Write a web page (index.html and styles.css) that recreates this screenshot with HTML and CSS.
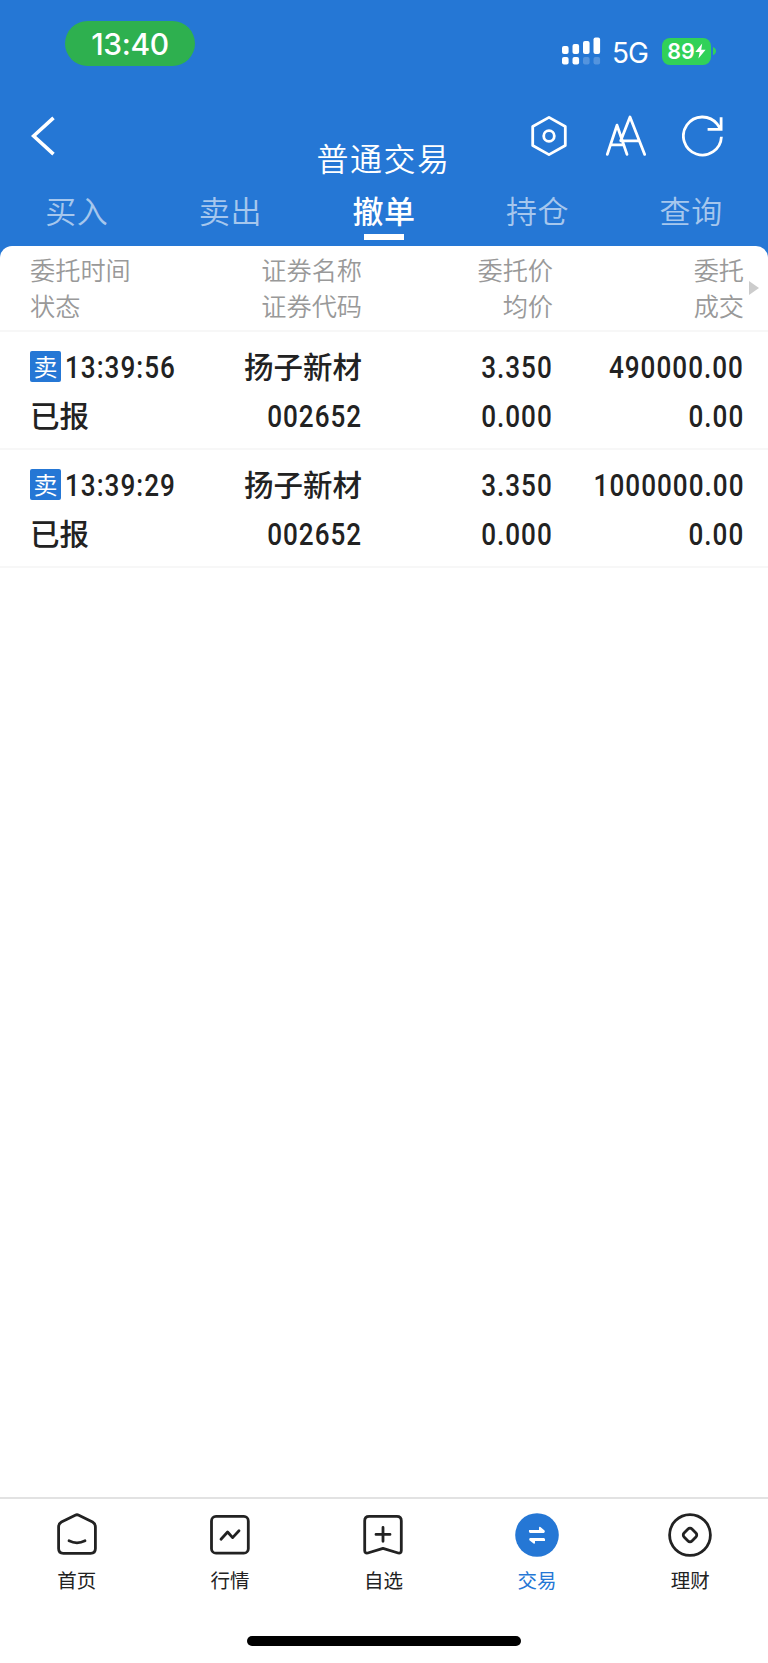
FILE: index.html
```html
<!DOCTYPE html>
<html lang="zh-CN">
<head>
  <meta charset="UTF-8">
  <title>普通交易</title>
  <link rel="stylesheet" href="styles.css">
</head>
<body>

  <header class="header">
    <div class="status-bar">
      <div class="clock">13:40</div>
      <div class="status-right">
        <svg class="signal" width="39" height="28" viewBox="0 0 39 28" fill="#fff">
          <rect x="0" y="9" width="6.6" height="8" rx="2"/>
          <rect x="10.5" y="7" width="6.6" height="10" rx="2"/>
          <rect x="21" y="4" width="6.6" height="13" rx="2"/>
          <rect x="31.5" y="0.5" width="6.6" height="16.5" rx="2"/>
          <rect x="0" y="20" width="6.6" height="7.5" rx="2"/>
          <rect x="10.5" y="20" width="6.6" height="7.5" rx="2"/>
          <rect x="21" y="20" width="6.6" height="7.5" rx="2" opacity=".22"/>
          <rect x="31.5" y="20" width="6.6" height="7.5" rx="2" opacity=".22"/>
        </svg>
        <span class="network">5G</span>
        <div class="battery">
          <span>89</span>
          <svg width="11" height="16" viewBox="0 0 11 16" fill="#fff"><path d="M7.2 0.5L0.3 9h4.4L3.4 15.5L10.6 6.8H6.2z"/></svg>
        </div>
        <svg class="battery-tip" width="3" height="8" viewBox="0 0 3 8"><path d="M0 0Q3 1 3 4T0 8z" fill="#31d158"/></svg>
      </div>
    </div>

    <div class="nav-bar">
      <svg class="back" width="24" height="40" viewBox="0 0 24 40" fill="none" stroke="#fff" stroke-width="3.6"><path d="M22.5 1.8L2.6 20L22.5 38.2"/></svg>
      <h1>普通交易</h1>
      <div class="nav-icons">
        <svg width="42" height="42" viewBox="0 0 42 42" fill="none" stroke="#fff" stroke-width="2.8" stroke-linejoin="round">
          <path d="M21 2.4L37.3 11.5V30.5L21 39.6L4.7 30.5V11.5z"/>
          <circle cx="21" cy="21" r="5.3"/>
        </svg>
        <svg width="42" height="42" viewBox="0 0 42 42" fill="none" stroke="#fff" stroke-width="2.8" stroke-linecap="round" stroke-linejoin="round">
          <path d="M2.3 39.4L12 10.2L22 39.4M6 29.8H18.5M15.7 25.8L25 2L39.7 39.4M17.5 25.8H34"/>
        </svg>
        <svg width="42" height="42" viewBox="0 0 42 42" fill="none" stroke="#fff" stroke-width="2.8">
          <path d="M39.4 21.8A19 19 0 1 1 35.3 9.2L38.5 14M39.1 2.2V14.3H25.6"/>
        </svg>
      </div>
    </div>

    <nav class="tabs">
      <a>买入</a>
      <a>卖出</a>
      <a class="active">撤单</a>
      <a>持仓</a>
      <a>查询</a>
    </nav>
  </header>

  <main class="sheet">
    <div class="row head">
      <div class="cell">委托时间<br>状态</div>
      <div class="cell">证券名称<br>证券代码</div>
      <div class="cell">委托价<br>均价</div>
      <div class="cell">委托<br>成交</div>
      <span class="more"></span>
    </div>

    <div class="row">
      <div class="cell">
        <div class="line"><span class="sell">卖</span><span class="num">13:39:56</span></div>
        <div class="line">已报</div>
      </div>
      <div class="cell">
        <div class="line">扬子新材</div>
        <div class="line"><span class="num">002652</span></div>
      </div>
      <div class="cell">
        <div class="line"><span class="num">3.350</span></div>
        <div class="line"><span class="num">0.000</span></div>
      </div>
      <div class="cell">
        <div class="line"><span class="num">490000.00</span></div>
        <div class="line"><span class="num">0.00</span></div>
      </div>
    </div>

    <div class="row">
      <div class="cell">
        <div class="line"><span class="sell">卖</span><span class="num">13:39:29</span></div>
        <div class="line">已报</div>
      </div>
      <div class="cell">
        <div class="line">扬子新材</div>
        <div class="line"><span class="num">002652</span></div>
      </div>
      <div class="cell">
        <div class="line"><span class="num">3.350</span></div>
        <div class="line"><span class="num">0.000</span></div>
      </div>
      <div class="cell">
        <div class="line"><span class="num">1000000.00</span></div>
        <div class="line"><span class="num">0.00</span></div>
      </div>
    </div>
  </main>

  <footer class="footer">
    <nav class="bottom-nav">
      <a>
        <svg width="46" height="46" viewBox="0 0 46 46" fill="none" stroke="#222" stroke-width="2.8" stroke-linecap="round" stroke-linejoin="round">
          <path d="M21.2 3.2Q23 2.3 24.8 3.2L38.6 10Q41.4 11.6 41.4 15V36.5Q41.4 41.3 36.6 41.3H9.4Q4.6 41.3 4.6 36.5V15Q4.6 11.6 7.4 10z"/>
          <path d="M15 28.8Q23 32.8 31 28.8"/>
        </svg>
        首页
      </a>
      <a>
        <svg width="46" height="46" viewBox="0 0 46 46" fill="none" stroke="#222" stroke-width="2.8" stroke-linecap="round" stroke-linejoin="round">
          <rect x="4.5" y="4.4" width="36.8" height="36.8" rx="4.5"/>
          <path d="M14 27.2L20.6 20L25.6 25.6L32 18.8"/>
        </svg>
        行情
      </a>
      <a>
        <svg width="46" height="46" viewBox="0 0 46 46" fill="none" stroke="#222" stroke-width="2.8" stroke-linecap="round" stroke-linejoin="round">
          <path d="M9.1 4.4H36.9Q41.3 4.4 41.3 8.8V38.5Q41.3 41.6 38.2 41L23 36.3L7.8 41Q4.7 41.6 4.7 38.5V8.8Q4.7 4.4 9.1 4.4z"/>
          <path d="M23 15.5V29.3M16 22.4H30"/>
        </svg>
        自选
      </a>
      <a class="active">
        <svg width="46" height="46" viewBox="0 0 46 46">
          <circle cx="23" cy="23" r="21.8" fill="#2577d5"/>
          <path d="M15 18H25V15.6Q25.3 14.4 26.4 15.1L30.6 18.6Q31.5 20.6 29.8 20.9H16Q14.4 20.4 15 18zM31 29H21V31Q20.7 32.2 19.6 31.5L15.4 28.2Q14.5 26.4 16.2 26.1H30Q31.6 26.4 31 29z" fill="#fff"/>
        </svg>
        交易
      </a>
      <a>
        <svg width="46" height="46" viewBox="0 0 46 46" fill="none" stroke="#222" stroke-width="2.8">
          <circle cx="23" cy="23" r="20.4"/>
          <rect x="17.4" y="17.4" width="11.2" height="11.2" rx="2.8" transform="rotate(45 23 23)"/>
        </svg>
        理财
      </a>
    </nav>
    <div class="home-indicator"></div>
  </footer>

</body>
</html>
```

FILE: styles.css
```css
* {
  box-sizing: border-box;
}
body {
  margin: 0;
  height: 1663px;
  display: flex;
  flex-direction: column;
  background: #fff;
  color: #222;
  font-family: 'Noto Sans CJK SC', sans-serif;
}
svg {
  display: block;
  flex: none;
}

/* header */
.header {
  height: 258px;
  background: #2577d5;
  color: #fff;
}
.status-bar {
  height: 100px;
  padding: 21px 52px 0 65px;
  display: flex;
  justify-content: space-between;
  align-items: flex-start;
}
.clock {
  width: 130px;
  height: 45px;
  border-radius: 23px;
  background: #2eb04f;
  text-align: center;
  font: 500 30px/46px Inter, sans-serif;
  letter-spacing: -0.4px;
}
.status-right {
  display: flex;
  align-items: center;
  height: 28px;
  margin-top: 16px;
}
.network {
  width: 36px;
  margin: 3px 14px 0 11px;
  font: 400 28px/28px Inter, sans-serif;
  letter-spacing: -1px;
}
.battery {
  width: 49px;
  height: 27px;
  border-radius: 8px;
  background: #31d158;
  display: flex;
  align-items: center;
  justify-content: center;
  font: 600 21.5px/27px Inter, sans-serif;
}
.battery-tip {
  margin-left: 2px;
}
.nav-bar {
  height: 82px;
  padding: 15px 44px 0 31px;
  display: grid;
  grid-template-columns: 1fr auto 1fr;
  align-items: start;
}
.back {
  margin-top: 1px;
}
.nav-bar h1 {
  margin: 22px 0 0 12px;
  font-size: 32px;
  font-weight: 350;
  line-height: 40px;
  letter-spacing: 1.5px;
}
.nav-icons {
  display: flex;
  justify-content: flex-end;
  gap: 35px;
}
.tabs, .bottom-nav {
  display: grid;
  grid-template-columns: repeat(5, 1fr);
}
.tabs a {
  display: flex;
  flex-direction: column;
  align-items: center;
  height: 60px;
  padding-top: 2px;
  font-size: 31px;
  font-weight: 350;
  line-height: 51px;
  letter-spacing: 0.6px;
  color: rgba(255, 255, 255, 0.6);
}
.tabs .active {
  font-weight: 500;
  color: #fff;
}
.tabs .active::after {
  content: '';
  width: 40px;
  height: 6px;
  margin-top: -1px;
  background: #fff;
}

/* order list */
.sheet {
  flex: 1;
  margin-top: -12px;
  border-radius: 12px 12px 0 0;
  background: #fff;
}
.row {
  display: grid;
  grid-template-columns: 160px 172px 191px 191px;
  height: 118.3px;
  padding: 9px 24px 0 30px;
  border-bottom: 2px solid #f7f7f7;
  font-size: 29.5px;
  font-weight: 500;
}
.cell {
  text-align: right;
  white-space: nowrap;
}
.cell:first-child {
  text-align: left;
}
.line {
  height: 49.5px;
  line-height: 49.5px;
}
.head {
  grid-template-columns: 160px 172px 191px 191px auto;
  height: 85.5px;
  padding: 5px 0 0 30px;
  font-size: 25.2px;
  font-weight: 350;
  line-height: 36.3px;
  color: #999;
}
.more {
  width: 0;
  height: 0;
  margin: 30px 0 0 5px;
  border-left: 10px solid #ccc;
  border-top: 7px solid transparent;
  border-bottom: 7px solid transparent;
}
.num {
  display: inline-block;
  font-family: Roboto, sans-serif;
  font-size: 30.5px;
  letter-spacing: 1.2px;
  transform: scaleX(0.855);
  transform-origin: right;
}
.sell {
  display: inline-block;
  width: 31px;
  height: 31px;
  margin-right: 4px;
  border-radius: 2px;
  background: #2577d5;
  color: #fff;
  font-size: 24px;
  font-weight: 400;
  line-height: 30px;
  text-align: center;
  vertical-align: 2px;
}
.sell + .num {
  transform-origin: left;
}

/* bottom bar */
.footer {
  height: 166px;
  border-top: 2px solid #e2e2e2;
}
.bottom-nav {
  padding: 13px 1px 0 0;
}
.bottom-nav a {
  display: flex;
  flex-direction: column;
  align-items: center;
  font-size: 19.5px;
  line-height: 43px;
}
.bottom-nav .active {
  color: #2577d5;
}
.home-indicator {
  width: 274px;
  height: 10px;
  margin: 35px auto 0;
  border-radius: 5px;
  background: #000;
}
```
